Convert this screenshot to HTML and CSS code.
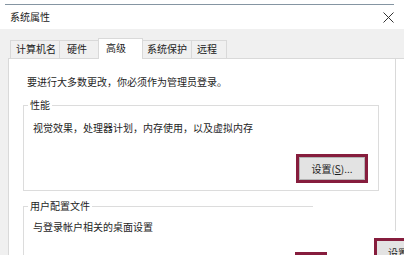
FILE: index.html
```html
<!DOCTYPE html>
<html lang="zh-CN">
<head>
<meta charset="utf-8">
<title>系统属性</title>
<link rel="stylesheet" href="styles.css">
</head>
<body>
<div class="window">
  <div class="titlebar">
    <span class="title">系统属性</span>
    <svg class="close" width="11" height="11" viewBox="0 0 11 11"><path d="M0.5 0.5 L10.5 10.5 M10.5 0.5 L0.5 10.5" stroke="#333" stroke-width="1" fill="none"/></svg>
  </div>
  <div class="client">
    <div class="tabs">
      <div class="tab tab-1">计算机名</div>
      <div class="tab tab-2">硬件</div>
      <div class="tab tab-3 active">高级</div>
      <div class="tab tab-4">系统保护</div>
      <div class="tab tab-5">远程</div>
    </div>
    <div class="panel">
      <p class="intro">要进行大多数更改，你必须作为管理员登录。</p>
      <fieldset class="group group-perf">
        <legend>性能</legend>
        <p class="desc">视觉效果，处理器计划，内存使用，以及虚拟内存</p>
        <div class="actions">
          <div class="btn-frame"><button class="btn">设置(<u>S</u>)...</button></div>
        </div>
      </fieldset>
      <fieldset class="group group-profile">
        <legend>用户配置文件</legend>
        <p class="desc desc-profile">与登录帐户相关的桌面设置</p>
      </fieldset>
    </div>
  </div>
  <div class="frag frag-a"></div>
  <div class="frag frag-b"><span class="frag-text">设置</span></div>
</div>
</body>
</html>
```
FILE: styles.css
```css
html, body {
  margin: 0;
  padding: 0;
  background: #fff;
}
.window {
  position: relative;
  width: 404px;
  height: 255px;
  overflow: hidden;
  background: #fff;
  font-family: "Noto Sans CJK SC", "Noto Sans", sans-serif;
  font-size: 10px;
  color: #1e1e1e;
  display: flex;
  flex-direction: column;
}
.titlebar {
  flex: none;
  margin: 4px 10px 0 5px;
  height: 24px;
  border-top: 1px solid #8595a2;
  display: flex;
  justify-content: space-between;
  align-items: flex-start;
}
.title {
  padding: 5px 0 0 5px;
  line-height: 14px;
  color: #222;
}
.close {
  margin-top: 7px;
}
.client {
  flex: 1 0 auto;
  background: #f0f0f0;
  padding-top: 9px;
  display: flex;
  flex-direction: column;
}
.tabs {
  flex: none;
  display: flex;
  align-items: flex-end;
  padding-left: 10px;
}
.tab {
  box-sizing: border-box;
  height: 18px;
  line-height: 16px;
  border: 1px solid #d9d9d9;
  border-bottom: none;
  background: #f0f0f0;
  margin-right: -1px;
  color: #222;
  white-space: nowrap;
}
.tab-1 { width: 50px; padding-left: 5px; }
.tab-2 { width: 41px; padding-left: 7px; }
.tab-4 { width: 50px; padding-left: 4px; }
.tab-5 { width: 36px; padding-left: 5px; }
.tab.active {
  position: relative;
  z-index: 1;
  width: 45px;
  height: 21px;
  margin-bottom: -1px;
  margin-left: -1px;
  padding-left: 7px;
  line-height: 17px;
  background: #fff;
}
.panel {
  flex: 1 0 auto;
  margin-left: 8px;
  border-left: 1px solid #d9d9d9;
  border-top: 1px solid #d9d9d9;
  background: linear-gradient(#d9d9d9, #d9d9d9) 386px 0 / 1px 172px no-repeat, #fff;
}
.intro {
  margin: 16px 0 0 18px;
  line-height: 14px;
}
.group {
  margin: 9px 0 0 14px;
  border: 1px solid #dcdcdc;
  padding: 9px 10px 7px 9px;
  min-width: 0;
}
.group legend {
  padding: 0 2px;
  margin-left: -5px;
  line-height: 14px;
}
.group-perf {
  width: 356px;
  box-sizing: border-box;
}
.group-profile {
  width: 290px;
  box-sizing: border-box;
  margin-top: 8px;
  border-right: none;
  padding-top: 7px;
  padding-bottom: 40px;
}
.desc {
  margin: 0;
  line-height: 14px;
}
.actions {
  display: flex;
  justify-content: flex-end;
  margin-top: 19px;
}
.btn-frame {
  box-sizing: border-box;
  width: 72px;
  height: 29px;
  border: 3px solid #861d3d;
  display: flex;
}
.btn {
  flex: 1;
  margin: 0;
  padding: 0;
  border: 1px solid #b4b4b4;
  background: #e3e3e3;
  font-family: inherit;
  font-size: 10px;
  color: #1e1e1e;
  line-height: 14px;
}
.frag {
  position: absolute;
  box-sizing: border-box;
  border: 3px solid #861d3d;
  background: #e3e3e3;
}
.frag-a {
  left: 295px;
  top: 252px;
  width: 32px;
  height: 12px;
}
.frag-b {
  left: 374px;
  top: 238px;
  width: 40px;
  height: 30px;
  padding: 5px 0 0 11px;
  line-height: 14px;
}
.frag-text {
  white-space: nowrap;
}
```
